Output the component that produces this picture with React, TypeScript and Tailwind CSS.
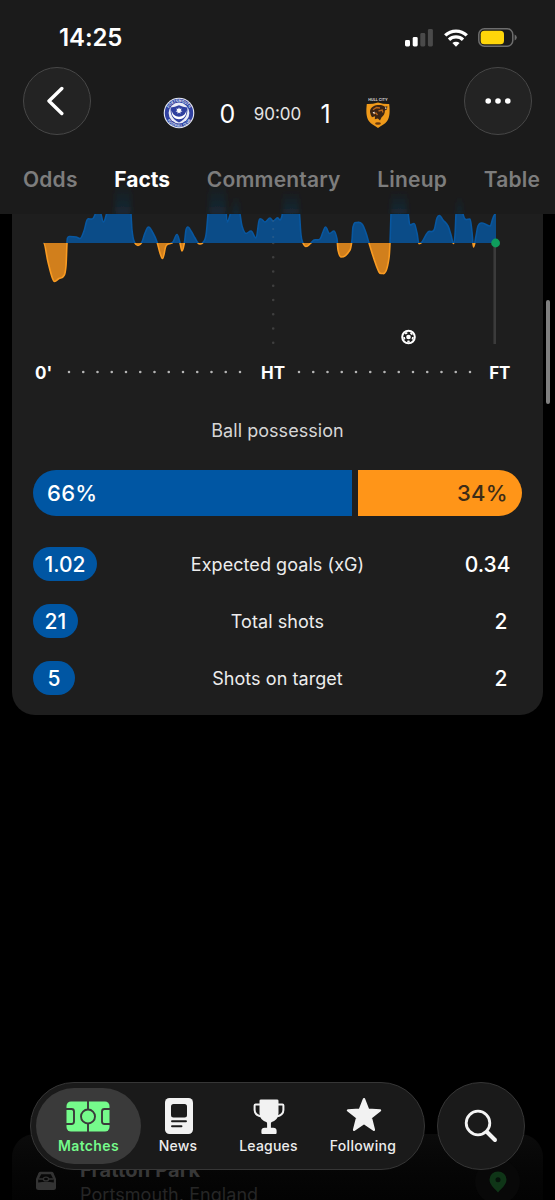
import type { ReactNode } from "react";

type Point = [number, number];

const BASELINE = 243;

// momentum over the match, above the baseline = home, below = away
const momentum: Point[] = [
  [43.5, 243], [48, 262], [52, 277], [54.5, 281.5], [59, 278.5], [64, 275.5], [66, 266], [67, 243],
  [67.5, 238], [70, 236.5], [76, 237], [80, 238.5], [84, 231], [87, 220], [90, 219], [93, 218.5], [97, 212],
  [100.5, 213], [103.5, 222], [107, 213], [113, 205], [116, 190], [129, 190], [131, 214], [132, 230],
  [134, 241], [138, 245.5], [142, 242], [145, 233], [148.5, 227], [153, 233], [157, 242], [160, 253],
  [162.5, 258.5], [166, 246], [170, 243.6], [173, 242], [177, 234.5], [180, 243], [182, 251], [184.5, 242],
  [186, 230], [188, 227], [191, 231], [195, 238], [198, 243], [200, 244], [203, 242.5], [206, 235],
  [208, 214], [210, 190], [225, 190], [227, 222], [230, 215], [233, 203], [238, 203], [240, 214],
  [242, 226], [246, 233.5], [251, 231], [256, 238], [259, 221], [261, 219], [265, 222], [270, 218],
  [273, 221], [277, 218], [282, 216], [284, 190], [297, 190], [299.5, 214], [301, 235], [303, 243],
  [306, 246.5], [311, 243], [314, 240], [320, 239], [323, 232], [325.5, 227], [329.5, 233.5], [334, 231],
  [337, 239], [338, 250], [341, 257], [350, 250], [352, 240], [353, 227], [357, 222.5], [362, 224],
  [366, 233], [369, 243], [374, 259], [379, 272], [382, 273.5], [386, 271], [389, 258], [390, 243],
  [391, 214], [392, 190], [406, 190], [408.5, 216], [410, 225], [414, 223.5], [417, 233], [419, 243.6],
  [422, 242], [428, 232], [434, 230], [437, 218], [439.5, 215.5], [443, 220], [448, 226], [451, 235],
  [453.5, 243.4], [455, 235], [456, 214], [458, 190], [460, 195], [463, 214], [466, 219.5], [470, 219],
  [472, 232], [473.5, 247], [476, 236], [478, 226], [482, 223], [490, 226], [493, 218], [496, 213],
];

function smooth(points: Point[]) {
  let d = `M${points[0][0]} ${points[0][1]}`;
  for (let i = 0; i < points.length - 1; i++) {
    const p0 = points[Math.max(i - 1, 0)];
    const p1 = points[i];
    const p2 = points[i + 1];
    const p3 = points[Math.min(i + 2, points.length - 1)];
    const t = (p2[0] - p1[0]) * 0.4;
    const s1 = (p1[1] - p0[1]) * (p2[1] - p1[1]) > 0 ? (p2[1] - p0[1]) / (p2[0] - p0[0]) : 0;
    const s2 = (p2[1] - p1[1]) * (p3[1] - p2[1]) > 0 ? (p3[1] - p1[1]) / (p3[0] - p1[0]) : 0;
    d += `C${p1[0] + t} ${p1[1] + s1 * t} ${p2[0] - t} ${p2[1] - s2 * t} ${p2[0]} ${p2[1]}`;
  }
  return d;
}

const line = smooth(momentum);
const area = `${line}V${BASELINE}H43.5Z`;

function MomentumChart() {
  return (
    <svg viewBox="12 150 531 200" className="block h-[200px] w-full">
      <clipPath id="home">
        <rect x="12" y="150" width="531" height={BASELINE - 150} />
      </clipPath>
      <clipPath id="away">
        <rect x="12" y={BASELINE} width="531" height="100" />
      </clipPath>
      <line x1="273.2" x2="273.2" y1="243" y2="345" stroke="#3f3f3f" strokeWidth="2.6" strokeLinecap="round" strokeDasharray="0 14.25" />
      <g clipPath="url(#home)">
        <path d={area} fill="#0b4c88" />
        <path d={line} fill="none" stroke="#0857a0" strokeWidth="1.6" />
      </g>
      <g clipPath="url(#away)">
        <path d={area} fill="#d17f1c" />
        <path d={line} fill="none" stroke="#f99b22" strokeWidth="1.6" />
      </g>
      <line x1="273.2" x2="273.2" y1="221" y2="238" stroke="#265a8a" strokeWidth="2.2" strokeLinecap="round" strokeDasharray="0 8" />
      <rect x="493.4" y="243" width="2.6" height="101" fill="#3b3b3b" />
      <circle cx="495.6" cy="243" r="4.4" fill="#0f9d5c" />
      <g stroke="#fff" fill="none">
        <circle cx="408.5" cy="337" r="6.3" strokeWidth="2" />
        <circle cx="408.5" cy="337" r="4.4" strokeWidth="1.6" strokeDasharray="2.4 3.13" />
        <circle cx="408.5" cy="337" r="2.3" fill="#fff" stroke="none" />
      </g>
    </svg>
  );
}

function Dots({ className }: { className: string }) {
  return (
    <svg viewBox="0 0 176 4" className={className}>
      <line x1="2" x2="174" y1="2" y2="2" stroke="#b5b5b5" strokeWidth="2.6" strokeLinecap="round" strokeDasharray="0 14.25" />
    </svg>
  );
}

function StatusBar() {
  return (
    <div className="flex h-[66px] items-start justify-between pr-[38px] pl-[59px] pt-[23px]">
      <span className="pt-px text-[24px] leading-[28px] font-semibold tracking-[-0.1px]">14:25</span>
      <div className="flex items-center pt-[5px]">
        <svg viewBox="0 0 28 18" className="h-[18px] w-7">
          <rect x="0" y="11" width="5" height="6.5" rx="1.4" fill="#fff" />
          <rect x="7.7" y="8" width="5" height="9.5" rx="1.4" fill="#fff" />
          <rect x="15.3" y="4" width="5" height="13.5" rx="1.4" fill="#4a4a4a" />
          <rect x="22.9" y="0" width="5" height="17.5" rx="1.4" fill="#4a4a4a" />
        </svg>
        <svg viewBox="0 0 24 18" className="ml-[11px] h-[18px] w-6">
          <g fill="none" stroke="#fff" strokeWidth="3.3">
            <path d="M1.2 6.4a15.6 15.6 0 0 1 21.6 0" />
            <path d="M5 10.7a10 10 0 0 1 14 0" />
          </g>
          <path d="M12 17.8l-3.6-3.7a5.2 5.2 0 0 1 7.2 0z" fill="#fff" />
        </svg>
        <svg viewBox="0 0 39 19" className="ml-[10px] h-[19px] w-[39px]">
          <rect x="0.8" y="0.8" width="34" height="17.4" rx="5.6" fill="none" stroke="#6d6d6d" strokeWidth="1.5" />
          <rect x="2.7" y="2.7" width="23.3" height="13.6" rx="3.6" fill="#ffd60a" />
          <path d="M36.6 6.6q2.2 1 2.2 2.9t-2.2 2.9z" fill="#6d6d6d" />
        </svg>
      </div>
    </div>
  );
}

function HomeCrest() {
  return (
    <svg viewBox="0 0 32 32" className="h-8 w-8">
      <defs>
        <path id="crest-top" d="M4.9 16a11.1 11.1 0 0 1 22.2 0" />
        <path id="crest-bottom" d="M2.2 16a13.8 13.8 0 0 0 27.6 0" />
      </defs>
      <circle cx="16" cy="16" r="15.3" fill="#e6eaf4" />
      <circle cx="16" cy="16" r="14.2" fill="#3040a0" />
      <circle cx="16" cy="16" r="10.4" fill="#e9ecf6" />
      <path d="M7.7 10.5Q12 10.3 16 8.2q4 2.1 8.3 2.3c.8 6-1.6 12-8.3 15-6.7-3-9.1-9-8.3-15z" fill="#2f409f" />
      <path d="M8.7 13.2c1 8.6 13.6 8.6 14.6 0 1.3 12-15.9 12-14.6 0z" fill="#fff" />
      <path d="M16 10.3l.8 1.8 1.900-.6-.9 1.800 1.600 1.100-2 .3.100 2-1.500-1.300-1.500 1.300.1-2-2-.3 1.600-1.100-.9-1.800 1.900.6z" fill="#fff" />
      <g fill="#dfe4f4" fontSize="3.4" fontWeight="700" textAnchor="middle">
        <text>
          <textPath href="#crest-top" startOffset="50%">PORTSMOUTH</textPath>
        </text>
        <text>
          <textPath href="#crest-bottom" startOffset="50%">FOOTBALL CLUB</textPath>
        </text>
      </g>
    </svg>
  );
}

function AwayCrest() {
  return (
    <svg viewBox="0 0 26 32" className="h-8 w-[26px]">
      <text x="13" y="4.2" fontSize="3.7" fontWeight="700" fill="#d6d6d6" textAnchor="middle">HULL CITY</text>
      <path d="M1.8 7Q7.5 7.2 13 5.4q5.500 1.800 11.200 1.600c.9 7.500.6 13.300-2.200 17.200-2.200 3-5.500 4.300-9 6.800-3.500-2.500-6.800-3.800-9-6.800C1.200 20.300.9 14.500 1.800 7z" fill="#f09a1a" />
      <path d="M5 15c0-4 3-6.300 7.500-7 3-.4 6 .2 7.400 1.700l2.500-.5-.5 3.200-2 1.200c.2 3-1.400 5.200-3.300 6.600L15 23.500l-2.200-2-3 .8.300-3L7 20.300 5.800 18z" fill="#3a2414" />
      <path d="M8 12.800l3.500-2.300 3.500.5M13.500 14l3.700-1 .7 2.500M8.500 17l2.500-1 1.500 2" fill="none" stroke="#b8651c" strokeWidth="1.3" />
      <path d="M7.500 15.200l2.300-.4-.4 2.500zM20.500 9.800l1.300 1.500-1.600 1z" fill="#f5e9dc" />
      <ellipse cx="13" cy="26.5" rx="2.9" ry="1.3" fill="#6b3c10" />
    </svg>
  );
}

function RoundButton({ children }: { children: ReactNode }) {
  return (
    <button className="flex h-[68px] w-[68px] items-center justify-center rounded-full border border-[#474747] bg-[#232323]">
      {children}
    </button>
  );
}

function Header() {
  return (
    <header className="absolute inset-x-0 top-0 z-10 h-[214px] overflow-hidden bg-[#1b1b1b]">
      {/* chart peaks shining through the bar */}
      <svg viewBox="0 150 555 64" className="absolute inset-x-0 bottom-0 h-16 w-full">
        <defs>
          <linearGradient id="fade" x1="0" x2="0" y1="0" y2="1">
            <stop offset="0" stopColor="#123a5c" stopOpacity="0" />
            <stop offset="1" stopColor="#123a5c" stopOpacity="0.4" />
          </linearGradient>
          <filter id="soft" x="-30%" width="160%">
            <feGaussianBlur stdDeviation="2.5 1" />
          </filter>
        </defs>
        <g fill="url(#fade)" filter="url(#soft)">
          <path d="M115 182h16v32h-16z" />
          <path d="M209 182h17v32h-17z" />
          <path d="M233 196h6v18h-6z" />
          <path d="M283 190h16v24h-16z" />
          <path d="M391 190h16v24h-16z" />
          <path d="M457 196h5v18h-5z" />
        </g>
      </svg>
      <div className="relative">
        <StatusBar />
        <div className="flex items-start justify-between px-[23px] pt-px">
          <RoundButton>
            <svg viewBox="0 0 18 30" className="mr-1 h-[30px] w-[18px]">
              <path d="M15.800 2.500L3 15l12.800 12.500" fill="none" stroke="#fff" strokeWidth="3.4" strokeLinecap="round" strokeLinejoin="round" />
            </svg>
          </RoundButton>
          <div className="mt-[30px] mr-[2px] flex h-8 w-[228px] items-center">
            <HomeCrest />
            <span className="ml-[25px] w-[16px] pt-px text-center text-[25px] leading-8">0</span>
            <span className="ml-[17px] w-[50px] pt-px text-center text-[17px] leading-8 text-[#e4e4e4]">90:00</span>
            <span className="ml-[17px] w-[12px] pt-px text-center text-[25px] leading-8">1</span>
            <span className="ml-auto">
              <AwayCrest />
            </span>
          </div>
          <RoundButton>
            <svg viewBox="0 0 26 6" className="h-1.5 w-[26px]" fill="#fff">
              <circle cx="3.2" cy="3" r="2.8" />
              <circle cx="13" cy="3" r="2.8" />
              <circle cx="22.8" cy="3" r="2.8" />
            </svg>
          </RoundButton>
        </div>
        <nav className="flex justify-between pr-[15px] pl-[23px] pt-[31px] text-[21px] leading-[28px] font-semibold tracking-[0.18px] text-[#7d7d7d]">
          <span>Odds</span>
          <span className="font-bold tracking-normal text-white">Facts</span>
          <span>Commentary</span>
          <span>Lineup</span>
          <span>Table</span>
        </nav>
      </div>
    </header>
  );
}

const stats = [
  { label: "Expected goals (xG)", home: "1.02", away: "0.34" },
  { label: "Total shots", home: "21", away: "2" },
  { label: "Shots on target", home: "5", away: "2" },
];

function FactsCard() {
  return (
    <section className="mx-3 h-[565px] rounded-b-[23px] bg-[#1e1e1e]">
      <MomentumChart />
      <div className="flex h-[46px] items-center pr-[33px] pl-[23px] text-[17px] font-bold">
        <span className="w-[32px] pt-px">0'</span>
        <Dots className="mb-[3px] h-1 w-[176px]" />
        <span className="ml-[18px] w-[36px] pt-px">HT</span>
        <Dots className="mb-[3px] h-1 w-[176px]" />
        <span className="ml-auto pt-px tracking-[-0.3px]">FT</span>
      </div>
      <div className="px-[21px]">
        <p className="pt-[21px] text-center text-[18px] leading-[28px] tracking-[0.05px] text-[#d6d6d6]">Ball possession</p>
        <div className="mt-[25px] flex h-[46px] gap-1.5 overflow-hidden rounded-full text-[22px] font-medium tracking-[0.3px]">
          <div className="flex w-[319px] items-center bg-[#0056a3] pl-[14px]">66%</div>
          <div className="flex flex-1 items-center justify-end bg-[#ff9518] pr-[14px] text-[#3d2c17]">34%</div>
        </div>
        <div className="mt-[31px] flex flex-col gap-[23px]">
          {stats.map((s) => (
            <div key={s.label} className="grid h-[34px] grid-cols-[1fr_auto_1fr] items-center">
              <span className="h-[34px] min-w-[42px] justify-self-start rounded-full bg-[#0056a3] px-[11.500px] text-center text-[21px] leading-[36px] font-medium">
                {s.home}
              </span>
              <span className="text-[18px] tracking-[0.06px] text-[#ededed]">{s.label}</span>
              <span className="h-[34px] min-w-[42px] justify-self-end px-[11.500px] text-center text-[21px] leading-[36px] font-medium">
                {s.away}
              </span>
            </div>
          ))}
        </div>
      </div>
    </section>
  );
}

function VenueCard() {
  return (
    <section className="mx-3 mt-[419px] flex h-[66px] rounded-t-[23px] bg-gradient-to-b from-[#0b0b0b] to-[#030303] pt-[23px] pl-[23px]">
      <svg viewBox="0 0 22 20" className="mt-[14px] h-5 w-[22px]">
        <path d="M5.500.8h11q1.500 0 2.100 1.400L21 8v8.500q0 2.500-2.500 2.500h-15Q1 19 1 16.500V8l2.400-5.800Q4 .8 5.500.8z" fill="#333" />
        <path d="M6.200 3.200h9.600L18.800 9v2.600Q11 9.800 3.200 11.600V9z" fill="#080808" />
        <path d="M3.500 8h5M13.500 8h5" stroke="#333" strokeWidth="1.3" />
        <ellipse cx="11" cy="8" rx="2.6" ry="1.9" fill="none" stroke="#333" strokeWidth="1.3" />
      </svg>
      <div className="ml-[23px]">
        <p className="text-[20px] leading-[26px] font-bold tracking-[0.15px] text-[#383838]">Fratton Park</p>
        <p className="text-[18px] leading-[24px] tracking-[0.06px] text-[#262626]">Portsmouth, England</p>
      </div>
      <div className="mt-0.5 mr-[23px] ml-auto flex h-[45px] w-[45px] items-center justify-center rounded-full bg-[#080808]">
        <svg viewBox="0 0 18 22" className="h-[22px] w-[18px]">
          <path d="M9 21.500C5 17 .5 13.500.5 8.500a8.500 8 0 0 1 17 0c0 5-4.500 8.500-8.500 13z" fill="#0f3517" />
          <circle cx="9" cy="8.8" r="2.5" fill="#06120a" />
        </svg>
      </div>
    </section>
  );
}

const PitchIcon = (
  <svg viewBox="0 0 44 31" className="mr-px h-[31px] w-11">
    <rect x="0.5" y="0.5" width="43" height="30" rx="4.5" fill="#75fb8b" />
    <g fill="none" stroke="#3a3a3a" strokeWidth="1.9">
      <path d="M22 0v8.500M22 22.500v8.500" />
      <circle cx="22" cy="15.5" r="7" />
      <path d="M0 8h5.500q2.500 0 2.500 2.500v10q0 2.500-2.500 2.500H0M44 8h-5.500q-2.500 0-2.500 2.500v10q0 2.500 2.500 2.500H44" />
    </g>
  </svg>
);

const NewsIcon = (
  <svg viewBox="0 0 28 36" className="ml-0.5 h-9 w-7">
    <rect width="28" height="36" rx="4.5" fill="#f2f2f2" />
    <rect x="6" y="6" width="16" height="13.5" rx="2.5" fill="#1b1b1b" />
    <path d="M7 23.200h14M7 28.300h9.500" stroke="#1b1b1b" strokeWidth="1.9" strokeLinecap="round" />
  </svg>
);

const TrophyIcon = (
  <svg viewBox="0 0 32 35" className="h-[35px] w-8">
    <path d="M7.500 5.500H2.600q-1 0-1 1v4.500q0 5 6.900 6.500M24.500 5.500h4.900q1 0 1 1v4.500q0 5-6.900 6.500" fill="none" stroke="#f2f2f2" strokeWidth="2" />
    <path d="M6.500 1.800Q6.500.5 8 .5h16q1.500 0 1.500 1.300V14q0 6.500-6.700 9-.9.400-.9 1.500v4.200h2.400q3.300 0 3.300 3.100V34q0 1-1 1H9.400q-1 0-1-1v-2.200q0-3.100 3.300-3.100h2.400v-4.200q0-1.100-.9-1.500-6.700-2.500-6.700-9z" fill="#f2f2f2" />
  </svg>
);

const StarIcon = (
  <svg viewBox="0 0 36 35" className="mb-[3px] ml-0.5 h-[35px] w-9">
    <path
      d="M18 2.200l4.100 10.500 11.900.7-9.200 7.200 3.100 12.200L18 26.100 8.100 32.800l3.100-12.200L2 13.400l11.900-.7z"
      fill="#f2f2f2"
      stroke="#f2f2f2"
      strokeWidth="2.4"
      strokeLinejoin="round"
    />
  </svg>
);

const tabs = [
  { label: "Matches", icon: PitchIcon, box: "w-[105px] rounded-full bg-[#3a3a3a] font-semibold tracking-[0.35px] text-[#75fb8b]" },
  { label: "News", icon: NewsIcon, box: "w-[74px] font-medium tracking-[0.15px]" },
  { label: "Leagues", icon: TrophyIcon, box: "w-[107px] font-medium tracking-[0.2px]" },
  { label: "Following", icon: StarIcon, box: "w-[82px] font-medium tracking-[0.3px]" },
];

function TabBar() {
  return (
    <div className="absolute inset-x-0 top-[1082px] z-10 flex gap-3 pl-[30px]">
      <nav className="flex h-[88px] w-[395px] rounded-full border border-[#363636] bg-[#1a1a1a] p-[5px] text-[#ededed]">
        {tabs.map((t) => (
          <div key={t.label} className={`flex h-[76px] shrink-0 flex-col items-center ${t.box}`}>
            <div className="flex h-[56px] items-center justify-center">{t.icon}</div>
            <span className="-mt-[7px] text-[14px] leading-[18px] whitespace-nowrap">{t.label}</span>
          </div>
        ))}
      </nav>
      <button className="flex h-[88px] w-[88px] items-center justify-center rounded-full border border-[#363636] bg-[#1a1a1a]">
        <svg viewBox="0 0 34 34" className="h-[34px] w-[34px]" fill="none" stroke="#f4f4f4">
          <circle cx="14" cy="14" r="11.8" strokeWidth="2.8" />
          <path d="M23 23l8 8" strokeWidth="4" strokeLinecap="round" />
        </svg>
      </button>
    </div>
  );
}

export default function App() {
  return (
    <div className="relative h-[1200px] w-[555px] overflow-hidden bg-black pt-[150px] font-['Inter',sans-serif] text-white">
      <Header />
      <FactsCard />
      <VenueCard />
      <div className="absolute top-[300px] right-[5px] h-[104px] w-1 rounded-full bg-[#808080]" />
      <TabBar />
    </div>
  );
}
